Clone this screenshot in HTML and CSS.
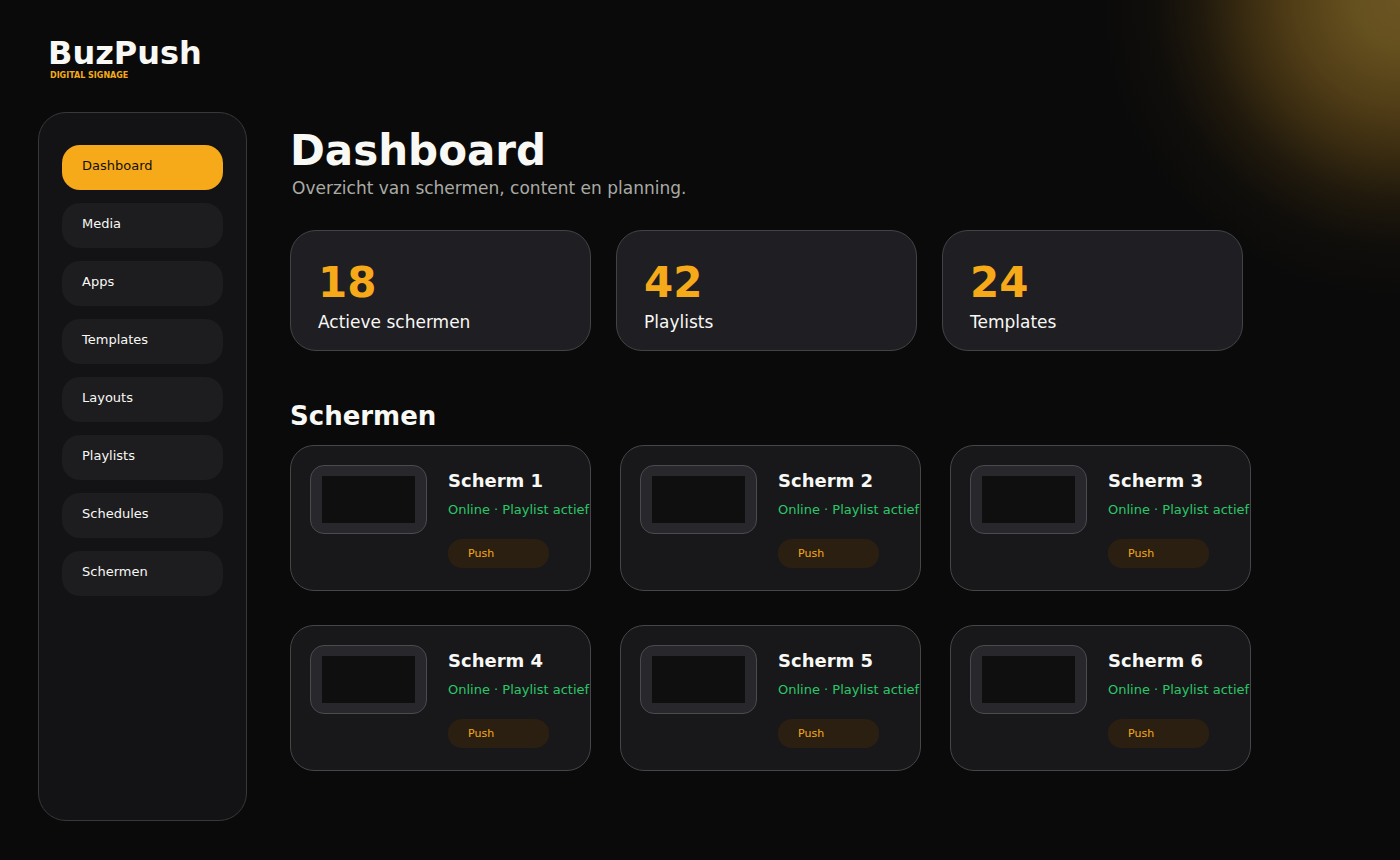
FILE: index.html
```
<!DOCTYPE html>
<html lang="nl">

<head>
    <meta charset="UTF-8">
    <meta name="viewport" content="width=device-width, initial-scale=1.0">
    <title>BuzPush - Dashboard</title>
    <link rel="stylesheet" href="styles.css">
</head>

<body>
    <header class="brand">
        <div class="brand-name">BuzPush</div>
        <div class="brand-tag">DIGITAL SIGNAGE</div>
    </header>
    <div class="layout">
        <!-- Menu -->
        <nav class="sidebar">
            <a class="active" href="#dashboard">Dashboard</a>
            <a href="#media">Media</a>
            <a href="#apps">Apps</a>
            <a href="#templates">Templates</a>
            <a href="#layouts">Layouts</a>
            <a href="#playlists">Playlists</a>
            <a href="#schedules">Schedules</a>
            <a href="#schermen">Schermen</a>
        </nav>
        <main class="content">
            <h1>Dashboard</h1>
            <p class="subtitle">Overzicht van schermen, content en planning.</p>

            <!-- Statistieken -->
            <div class="stats">
                <div class="stat">
                    <div class="stat-value">18</div>
                    <div class="stat-label">Actieve schermen</div>
                </div>
                <div class="stat">
                    <div class="stat-value">42</div>
                    <div class="stat-label">Playlists</div>
                </div>
                <div class="stat">
                    <div class="stat-value">24</div>
                    <div class="stat-label">Templates</div>
                </div>
            </div>

            <!-- Schermen -->
            <h2 id="schermen">Schermen</h2>
            <div class="screens">
                <div class="screen">
                    <div class="preview"><div class="preview-display"></div></div>
                    <div class="screen-info">
                        <h3>Scherm 1</h3>
                        <p class="status">Online · Playlist actief</p>
                        <button class="push" type="button">Push</button>
                    </div>
                </div>
                <div class="screen">
                    <div class="preview"><div class="preview-display"></div></div>
                    <div class="screen-info">
                        <h3>Scherm 2</h3>
                        <p class="status">Online · Playlist actief</p>
                        <button class="push" type="button">Push</button>
                    </div>
                </div>
                <div class="screen">
                    <div class="preview"><div class="preview-display"></div></div>
                    <div class="screen-info">
                        <h3>Scherm 3</h3>
                        <p class="status">Online · Playlist actief</p>
                        <button class="push" type="button">Push</button>
                    </div>
                </div>
                <div class="screen">
                    <div class="preview"><div class="preview-display"></div></div>
                    <div class="screen-info">
                        <h3>Scherm 4</h3>
                        <p class="status">Online · Playlist actief</p>
                        <button class="push" type="button">Push</button>
                    </div>
                </div>
                <div class="screen">
                    <div class="preview"><div class="preview-display"></div></div>
                    <div class="screen-info">
                        <h3>Scherm 5</h3>
                        <p class="status">Online · Playlist actief</p>
                        <button class="push" type="button">Push</button>
                    </div>
                </div>
                <div class="screen">
                    <div class="preview"><div class="preview-display"></div></div>
                    <div class="screen-info">
                        <h3>Scherm 6</h3>
                        <p class="status">Online · Playlist actief</p>
                        <button class="push" type="button">Push</button>
                    </div>
                </div>
            </div>
        </main>
    </div>
</body>

</html>
```

FILE: styles.css
```
* {
    box-sizing: border-box;
}

body {
    margin: 0;
    min-height: 100vh;
    padding: 35px 38px 39px;
    display: flex;
    flex-direction: column;
    font-family: "DejaVu Sans", Verdana, sans-serif;
    color: #f8f8f5;
    background-color: #0a0a0a;
    /* gouden gloed rechtsboven */
    background-image: radial-gradient(circle 300px at 100% 0,
        #6b5422 0%,
        #65501f 15%,
        #523e17 35%,
        #3a2c11 51%,
        #1f180c 67%,
        #100e0b 82%,
        #0a0a0a 100%);
    background-repeat: no-repeat;
}

h1, h2, h3, p {
    margin: 0;
}

.brand {
    padding-left: 10px;
    margin-bottom: 31px;
    font-weight: bold;
}

.brand-name {
    font-size: 32px;
    line-height: 36px;
}

.brand-tag {
    padding-left: 2px;
    font-size: 8px;
    line-height: 10px;
    color: #f6aa19;
}

.layout {
    flex: 1;
    display: flex;
    gap: 43px;
}

/* Menu */
.sidebar {
    width: 209px;
    flex-shrink: 0;
    display: flex;
    flex-direction: column;
    gap: 13px;
    padding: 32px 23px;
    background-color: #131315;
    border: 1px solid #38383a;
    border-radius: 28px;
}

.sidebar a {
    padding: 13px 20px 16px;
    font-size: 13px;
    line-height: 16px;
    color: #f8f8f5;
    text-decoration: none;
    background-color: #1d1d1f;
    border-radius: 18px;
}

.sidebar a.active {
    color: #140f0a;
    background-color: #f6aa19;
}

/* Inhoud */
.content {
    flex: 1;
    padding: 14px 111px 0 0;
}

h1 {
    font-size: 42px;
    line-height: 50px;
}

.subtitle {
    padding-left: 2px;
    margin-top: 1px;
    font-size: 17px;
    line-height: 22px;
    color: #aaaaa5;
}

.stats {
    display: grid;
    grid-template-columns: repeat(3, 1fr);
    gap: 25px;
    margin: 31px 8px 50px 0;
}

.stat {
    padding: 27px 27px 17px;
    background-color: #1f1e22;
    border: 1px solid #434346;
    border-radius: 26px;
}

.stat-value {
    font-size: 42px;
    font-weight: bold;
    line-height: 50px;
    color: #f6aa19;
}

.stat-label {
    margin-top: 3px;
    font-size: 17px;
    line-height: 22px;
}

h2 {
    margin-bottom: 14px;
    font-size: 26px;
    line-height: 30px;
}

.screens {
    display: grid;
    grid-template-columns: repeat(3, 1fr);
    gap: 34px 29px;
}

.screen {
    display: flex;
    align-items: flex-start;
    gap: 21px;
    padding: 19px 0 22px 19px;
    background-color: #18181a;
    border: 1px solid #464649;
    border-radius: 24px;
}

.preview {
    width: 117px;
    height: 69px;
    flex-shrink: 0;
    padding: 10px 11px;
    background-color: #28272c;
    border: 1px solid #4b4b4f;
    border-radius: 14px;
}

.preview-display {
    height: 100%;
    background-color: #0f0f0f;
}

.screen-info {
    padding-top: 5px;
}

h3 {
    font-size: 18px;
    line-height: 22px;
}

.status {
    margin: 10px 0 21px;
    font-size: 13px;
    line-height: 16px;
    white-space: nowrap;
    color: #2ac769;
}

.push {
    display: block;
    width: 101px;
    padding: 8px 20px;
    font-family: inherit;
    font-size: 11px;
    line-height: 13px;
    text-align: left;
    color: #f6aa19;
    background-color: #2b1f12;
    border: none;
    border-radius: 14px;
    cursor: pointer;
}
```
